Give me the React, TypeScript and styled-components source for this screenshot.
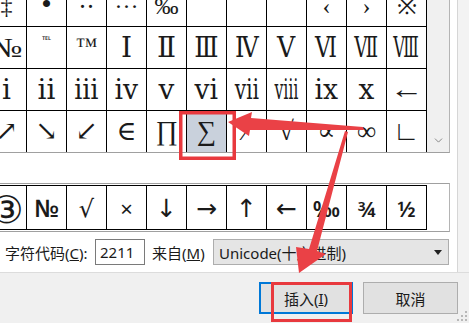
import React from "react";
import styled, { createGlobalStyle } from "styled-components";
import { ChevronDown } from "lucide-react";

const GlobalStyle = createGlobalStyle`
  html, body {
    margin: 0;
    padding: 0;
    background: #f0f0f0;
    overflow: hidden;
  }
  body {
    font-family: "Noto Sans", "Noto Sans CJK SC", sans-serif;
  }
`;

const Dialog = styled.div`
  position: relative;
  width: 469px;
  height: 323px;
  overflow: hidden;
  display: flex;
  flex-direction: column;
  background: #f0f0f0;
`;

const Body = styled.div`
  display: flex;
  height: 272px;
  background: #fff;
  border-bottom: 1px solid #dcdcdc;
`;

const Main = styled.div`
  width: 457px;
  display: flex;
  flex-direction: column;
`;

const SideStrip = styled.div`
  flex: 1;
  background: #f3f3f3;
  border-left: 1px solid #d6d6d6;
`;

const SymbolFrame = styled.div`
  display: flex;
  margin-top: -15px;
  height: 167px;
  width: 449px;
  border-right: 1px solid #b4b4b4;
  border-bottom: 1px solid #a0a0a0;
`;

const Clip = styled.div`
  width: 427px;
  overflow: hidden;
`;

const Grid = styled.div`
  display: grid;
  grid-template-columns: repeat(11, 40px);
  grid-template-rows: 42px 42px 42px 41px;
  margin-left: -13px;
`;

const Cell = styled.div<{ $size: number; $last?: boolean; $selected?: boolean; $sans?: boolean; $lift?: number }>`
  box-sizing: border-box;
  display: flex;
  align-items: center;
  justify-content: center;
  border-right: 1px solid #000;
  border-bottom: ${(p) => (p.$last ? "none" : "1px solid #000")};
  background: ${(p) => (p.$selected ? "#c9d1dc" : "#fff")};
  color: #1a1a1a;
  font-family: ${(p) =>
    p.$sans
      ? `"Noto Sans", "DejaVu Sans", sans-serif`
      : `"Liberation Serif", "DejaVu Serif", serif`};
  font-size: ${(p) => p.$size}px;
  line-height: 1;
  padding-bottom: ${(p) => p.$lift ?? 0}px;
  white-space: nowrap;
  overflow: hidden;
`;

const Glyph = styled.span<{ $sx?: number; $bold?: boolean }>`
  display: inline-block;
  transform: scaleX(${(p) => p.$sx ?? 1});
  font-weight: ${(p) => (p.$bold ? 600 : 400)};
`;

const Scrollbar = styled.div`
  width: 22px;
  background: #f0f0f0;
  display: flex;
  align-items: flex-end;
  justify-content: center;
  padding-bottom: 5px;
  box-sizing: border-box;
  color: #707070;
`;

const RecentFrame = styled.div`
  margin-top: 30px;
  width: 449px;
  padding: 1px 0;
  border-top: 1px solid #a0a0a0;
  border-right: 1px solid #b4b4b4;
  border-bottom: 1px solid #a0a0a0;
  display: flex;
`;

const RecentRow = styled.div`
  display: grid;
  grid-template-columns: repeat(11, 40px);
  grid-template-rows: 44px;
  margin-left: -13px;
  border-top: 1px solid #000;
`;

const CodeRow = styled.div`
  display: flex;
  align-items: center;
  margin-top: 7px;
  height: 26px;
  padding-left: 5px;
  font-family: "Noto Sans", "Noto Sans CJK SC", sans-serif;
  font-size: 15px;
  color: #1a1a1a;
`;

const Label = styled.span<{ $w: number; $ml?: number }>`
  width: ${(p) => p.$w}px;
  margin-left: ${(p) => p.$ml ?? 0}px;
  white-space: nowrap;
`;

const CodeInput = styled.div`
  box-sizing: border-box;
  width: 50px;
  height: 26px;
  border: 1px solid #7a7a7a;
  padding-left: 4px;
  display: flex;
  align-items: center;
  background: #fff;
`;

const Select = styled.div`
  box-sizing: border-box;
  width: 236px;
  height: 26px;
  border: 1px solid #adadad;
  background: #e5e5e5;
  display: flex;
  align-items: center;
  justify-content: space-between;
  padding: 0 6px 0 5px;
`;

const Footer = styled.div`
  flex: 1;
  display: flex;
  justify-content: flex-end;
  align-items: flex-start;
  gap: 10px;
  padding: 9px 11px 0 0;
  position: relative;
`;

const Button = styled.div<{ $primary?: boolean; $w: number }>`
  box-sizing: border-box;
  width: ${(p) => p.$w}px;
  height: 32px;
  display: flex;
  align-items: center;
  justify-content: center;
  background: #e1e1e1;
  border: 1px solid ${(p) => (p.$primary ? "#0078d7" : "#adadad")};
  box-shadow: ${(p) => (p.$primary ? "inset 0 0 0 1px #0078d7" : "none")};
  font-family: "Noto Sans", "Noto Sans CJK SC", sans-serif;
  font-size: 15px;
  color: #1a1a1a;
`;

const Grip = styled.svg`
  position: absolute;
  right: 1px;
  bottom: 1px;
`;

const Overlay = styled.svg`
  position: absolute;
  left: 0;
  top: 0;
  pointer-events: none;
`;

type Sym = { ch: string; size?: number; lift?: number; sx?: number; bold?: boolean };

const rows: Sym[][] = [
  [
    { ch: "‡" }, { ch: "•", size: 30, lift: 4 }, { ch: "‥", lift: 12 }, { ch: "…", lift: 12 },
    { ch: "‰", lift: -12 }, { ch: "" }, { ch: "" }, { ch: "" }, { ch: "‹" }, { ch: "›" }, { ch: "※" },
  ],
  [
    { ch: "№", size: 28, sx: 1.2 }, { ch: "℡", size: 11, lift: 14 }, { ch: "™", size: 22, lift: 4 },
    { ch: "Ⅰ" }, { ch: "Ⅱ" }, { ch: "Ⅲ", sx: 0.9 }, { ch: "Ⅳ", sx: 0.85 }, { ch: "Ⅴ", sx: 0.9 },
    { ch: "Ⅵ", sx: 0.78 }, { ch: "Ⅶ", sx: 0.66 }, { ch: "Ⅷ", sx: 0.58 },
  ],
  [
    { ch: "ⅰ" }, { ch: "ⅱ" }, { ch: "ⅲ", sx: 0.9 }, { ch: "ⅳ", sx: 0.95 }, { ch: "ⅴ" }, { ch: "ⅵ", sx: 0.95 },
    { ch: "ⅶ", sx: 0.72 }, { ch: "ⅷ", sx: 0.56 }, { ch: "ⅸ", sx: 0.95 }, { ch: "ⅹ" }, { ch: "←", size: 26, sx: 1.3 },
  ],
  [
    { ch: "↗" }, { ch: "↘" }, { ch: "↙" }, { ch: "∈" }, { ch: "∏" }, { ch: "∑" },
    { ch: "∕" }, { ch: "√" }, { ch: "∝" }, { ch: "∞" }, { ch: "∟" },
  ],
];

const rowSizes = [24, 28, 28, 27];

const recent: Sym[] = [
  { ch: "③", size: 38 }, { ch: "№", size: 24, bold: true }, { ch: "√", size: 24 }, { ch: "×", size: 22 },
  { ch: "↓", size: 25 }, { ch: "→", size: 25 }, { ch: "↑", size: 25 }, { ch: "←", size: 25 },
  { ch: "‰", size: 22, bold: true }, { ch: "¾", size: 22, bold: true }, { ch: "½", size: 22, bold: true },
];

export default function App() {
  return (
    <Dialog>
      <GlobalStyle />
      <Body>
        <Main>
          <SymbolFrame>
            <Clip>
              <Grid>
                {rows.map((row, r) =>
                  row.map((s, c) => (
                    <Cell
                      key={`${r}-${c}`}
                      $size={s.size ?? rowSizes[r]}
                      $lift={s.lift}
                      $last={r === rows.length - 1}
                      $selected={s.ch === "∑"}
                    >
                      <Glyph $sx={s.sx}>{s.ch}</Glyph>
                    </Cell>
                  ))
                )}
              </Grid>
            </Clip>
            <Scrollbar>
              <ChevronDown size={13} strokeWidth={1.5} />
            </Scrollbar>
          </SymbolFrame>

          <RecentFrame>
            <Clip>
              <RecentRow>
                {recent.map((s, i) => (
                  <Cell key={i} $size={s.size ?? 22} $sans>
                    <Glyph $bold={s.bold}>{s.ch}</Glyph>
                  </Cell>
                ))}
              </RecentRow>
            </Clip>
          </RecentFrame>

          <CodeRow>
            <Label $w={90}>
              字符代码(<u>C</u>):
            </Label>
            <CodeInput>2211</CodeInput>
            <Label $w={61} $ml={7}>
              来自(<u>M</u>)
            </Label>
            <Select>
              <span>Unicode(十六进制)</span>
              <svg width="8" height="5" viewBox="0 0 8 5">
                <polygon points="0,0 8,0 4,5" fill="#222" />
              </svg>
            </Select>
          </CodeRow>
        </Main>
        <SideStrip />
      </Body>

      <Footer>
        <Button $primary $w={94}>
          插入(<u>I</u>)
        </Button>
        <Button $w={95}>取消</Button>
        <Grip width="12" height="12" viewBox="0 0 12 12">
          {[
            [9, 1], [9, 5], [5, 5], [9, 9], [5, 9], [1, 9],
          ].map(([x, y], i) => (
            <rect key={i} x={x} y={y} width="2" height="2" fill="#b8b8b8" />
          ))}
        </Grip>
      </Footer>

      <Overlay width="469" height="323" viewBox="0 0 469 323">
        <rect x="180.75" y="112.75" width="53.5" height="45.5" fill="none" stroke="#e8393e" strokeWidth="3.5" />
        <rect x="272.5" y="283.5" width="78" height="37" fill="none" stroke="#e8393e" strokeWidth="3" />
        <polygon
          points="363,127 364,130 250,130 249,136 228,122 252,112 251,118"
          fill="#ea4146"
        />
        <polygon
          points="345,131 348,132 317,251 326,254 299,273 296,247 309,249"
          fill="#ea4146"
        />
      </Overlay>
    </Dialog>
  );
}
